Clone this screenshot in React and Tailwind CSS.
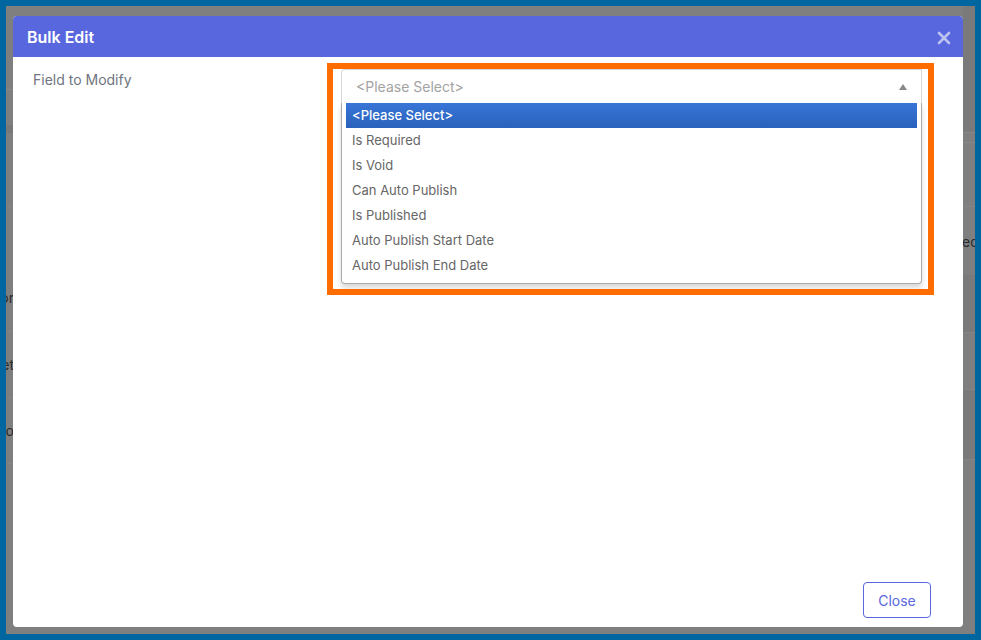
import React from 'react';

const options = [
  'Is Required',
  'Is Void',
  'Can Auto Publish',
  'Is Published',
  'Auto Publish Start Date',
  'Auto Publish End Date',
];

// rows of the page that is dimmed behind the dialog: [height, classes, text]
const leftRows = [
  [84, 'border-b border-[#898989]', ''],
  [35, '', ''],
  [8, 'bg-[#787878]', ''],
  [74, 'border-b border-[#858585]', ''],
  [57, '', ''],
  [68, 'border-b border-[#858585]', 'or'],
  [66, 'border-b border-[#858585]', 'et'],
  [66, 'border-b border-[#858585]', 'o'],
];

const rightRows = [
  [127, 'bg-[#7a7a7a] border-b border-[#888]', ''],
  [10, 'border-b border-[#888]', ''],
  [64, 'border-b border-[#858585]', ''],
  [68, '', 'ed'],
  [58, 'bg-[#7a7a7a] border-b border-[#858585]', ''],
  [57, 'border-b border-[#858585]', ''],
  [70, 'bg-[#7a7a7a] border-b border-[#858585]', ''],
];

function Strip({ rows, width, alignEnd }) {
  return (
    <div className={`flex flex-col shrink-0 overflow-hidden ${width}`}>
      {rows.map(([h, cls, text], i) => (
        <div
          key={i}
          style={{ height: h }}
          className={`flex items-center overflow-hidden shrink-0 ${alignEnd ? 'justify-end' : 'justify-start'} ${cls}`}
        >
          {text && (
            <span className={`text-[14px] text-[#2a2a2a] whitespace-nowrap ${alignEnd ? 'mr-[-1px]' : 'ml-[-1px]'}`}>
              {text}
            </span>
          )}
        </div>
      ))}
    </div>
  );
}

export default function App() {
  return (
    <div
      className="w-[981px] h-[640px] bg-[#0066a0] p-[6px]"
      style={{ fontFamily: 'Inter, "Noto Sans", sans-serif' }}
    >
      <div className="flex w-full h-full bg-[#7f7f7f] overflow-hidden">
        <Strip rows={leftRows} width="w-[7px]" alignEnd />

        <div className="flex-1 pt-[10px] pb-[7px]">
          {/* modal */}
          <div className="flex flex-col w-full h-full bg-white rounded-[4px] overflow-hidden">
            <div className="flex items-center justify-between h-[41px] bg-[#5867dd] pl-[14px] pr-[12px] shrink-0">
              <span className="text-white text-[16px] font-semibold">Bulk Edit</span>
              <svg width="14" height="14" viewBox="0 0 14 14" className="mt-[2px]">
                <path d="M2 2 L12 12 M12 2 L2 12" stroke="#bcc3f3" strokeWidth="2.6" strokeLinecap="round" />
              </svg>
            </div>

            <div className="flex flex-1 pt-[12px]">
              <div className="w-[328px] pl-[20px] text-[14px] text-[#6f7480] shrink-0">Field to Modify</div>
              <div className="relative w-[581px] h-fit">
                <div className="flex items-center justify-between h-[34px] border border-[#d8d8d8] border-b-0 rounded-tl-[4px] px-[14px]">
                  <span className="text-[14px] text-[#a3a3a3]">&lt;Please Select&gt;</span>
                  <svg width="8" height="6" viewBox="0 0 8 6">
                    <path d="M0 6 L4 0 L8 6 Z" fill="#888" />
                  </svg>
                </div>
                <div className="border border-[#aaa] border-t-0 rounded-b-[4px] shadow-[0_4px_5px_rgba(0,0,0,0.15)] px-[4px] pb-[5px]">
                  <div className="flex items-center h-[25px] px-[6px] text-[13px] font-medium text-white bg-gradient-to-b from-[#3875d7] to-[#2a62bc]">
                    &lt;Please Select&gt;
                  </div>
                  {options.map((o) => (
                    <div key={o} className="flex items-center h-[25px] px-[6px] text-[13px] text-[#666]">
                      {o}
                    </div>
                  ))}
                </div>
                {/* orange highlight drawn over the select */}
                <div className="absolute -left-[14px] -top-[6px] w-[607px] h-[232px] border-[6px] border-[#ff6d00] pointer-events-none" />
              </div>
            </div>

            <div className="flex justify-end pr-[32px] pb-[9px] shrink-0">
              <button className="w-[68px] h-[36px] border border-[#5867dd] rounded-[4px] text-[14px] text-[#5867dd]">
                Close
              </button>
            </div>
          </div>
        </div>

        <Strip rows={rightRows} width="w-[12px]" />
      </div>
    </div>
  );
}
